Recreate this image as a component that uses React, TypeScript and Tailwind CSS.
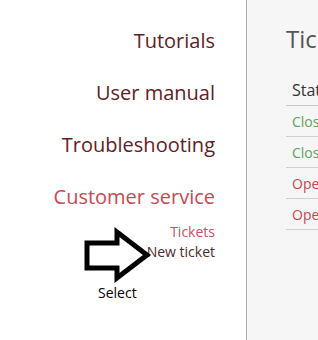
const MENU = ['Tutorials', 'User manual', 'Troubleshooting']

const ROWS = [
  { status: 'Closed', color: 'text-[#62a05e]' },
  { status: 'Closed', color: 'text-[#62a05e]' },
  { status: 'Open', color: 'text-[#c4454f]' },
  { status: 'Open', color: 'text-[#c4454f]' },
]

function SelectArrow() {
  return (
    <div className="absolute left-[80px] top-[225px]">
      <svg width="75" height="60" viewBox="0 0 75 60">
        <polygon
          points="7,18 37,18 37,7 67,30 37,53 37,43 7,43"
          fill="none"
          stroke="#000"
          strokeWidth="5"
          strokeLinejoin="miter"
        />
      </svg>
    </div>
  )
}

export default function App() {
  return (
    <div className="flex w-[318px] h-[340px] overflow-hidden bg-white font-['Open_Sans',sans-serif]">
      {/* Left nav */}
      <div className="relative w-[246px] shrink-0 h-full bg-white pr-[31px] pt-[15px] flex flex-col items-end">
        {MENU.map((m) => (
          <div key={m} className="h-[52px] leading-[52px] text-[20px] text-[#5c2228]">
            {m}
          </div>
        ))}
        <div className="h-[52px] leading-[52px] text-[20px] text-[#c24a55]">
          Customer service
        </div>
        <div className="flex flex-col items-end -mt-[1px]">
          <div className="h-[20px] leading-[20px] text-[14px] text-[#c2506a]">Tickets</div>
          <div className="h-[20px] leading-[20px] text-[14px] text-[#4a2c2e]">New ticket</div>
        </div>
        <SelectArrow />
        <div className="absolute left-[98px] top-[281px] text-[14px] leading-[24px] text-black">
          Select
        </div>
      </div>

      {/* Right content */}
      <div className="flex-1 h-full border-l border-[#adadad] bg-[#f6f6f6] pl-[39px] pt-[23px] overflow-hidden">
        <div className="w-[300px]">
          <div className="h-[32px] leading-[32px] text-[24px] text-[#555] whitespace-nowrap">Tickets</div>
          <div className="h-[51px] flex items-end pb-[3px] px-[6px] border-b border-[#c8c8c8]">
            <span className="text-[16px] leading-[24px] text-[#333]">Status</span>
          </div>
          {ROWS.map((r, i) => (
            <div key={i} className="h-[31px] flex items-center px-[6px] border-b border-[#d0d0d0]">
              <span className={`text-[14px] ${r.color}`}>{r.status}</span>
            </div>
          ))}
        </div>
      </div>
    </div>
  )
}
